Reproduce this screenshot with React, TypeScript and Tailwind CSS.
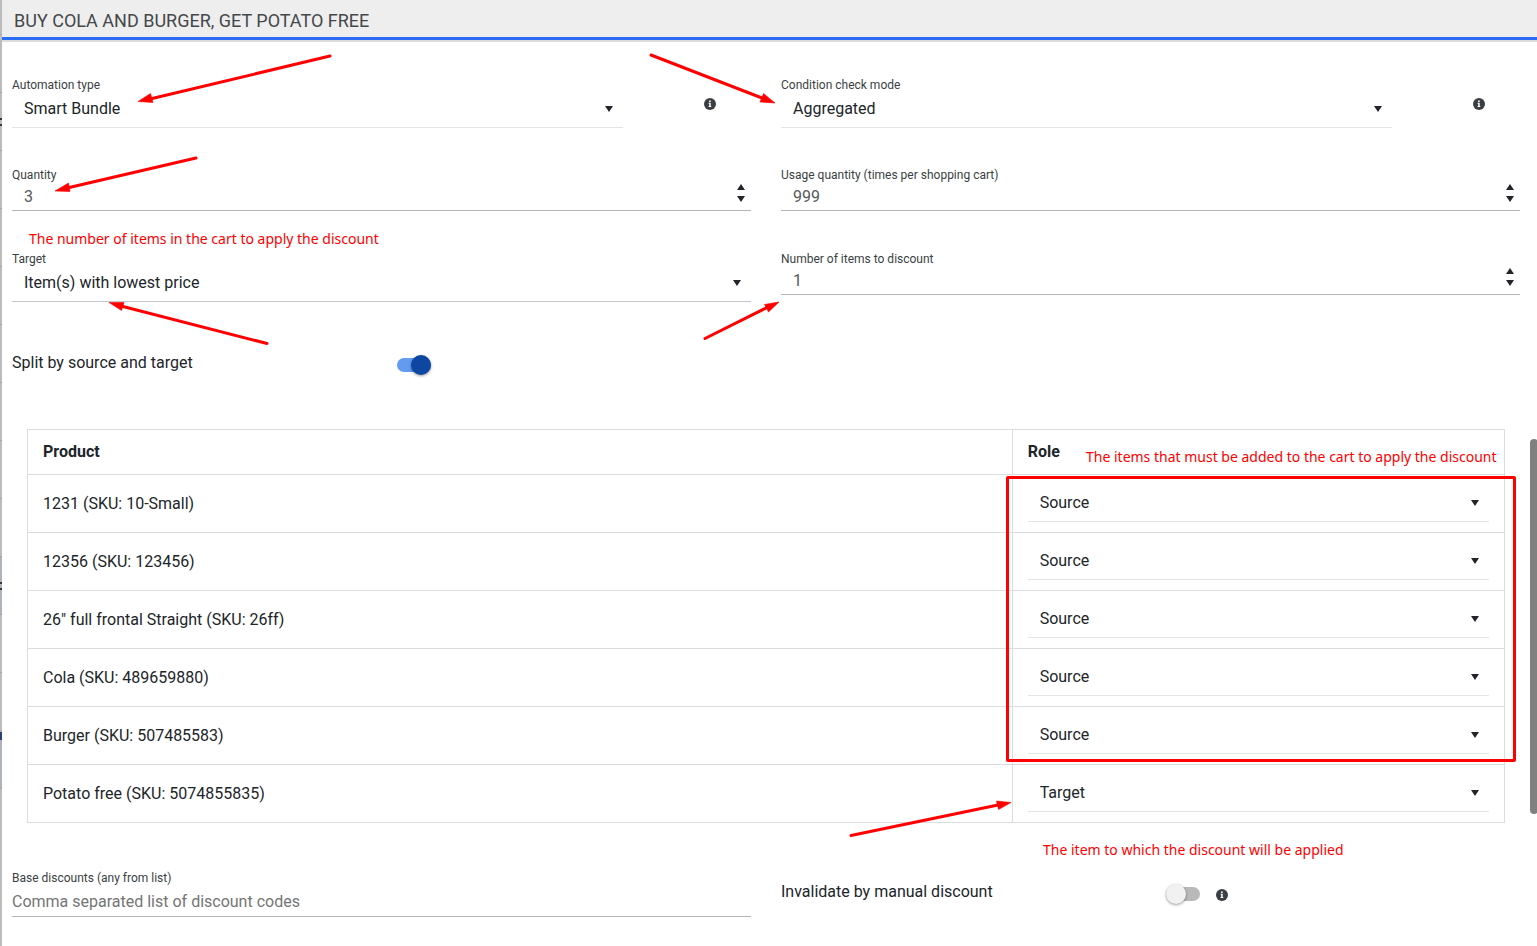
import { useId, type ReactNode } from "react";

const products = [
  { name: "1231 (SKU: 10-Small)", role: "Source" },
  { name: "12356 (SKU: 123456)", role: "Source" },
  { name: '26" full frontal Straight (SKU: 26ff)', role: "Source" },
  { name: "Cola (SKU: 489659880)", role: "Source" },
  { name: "Burger (SKU: 507485583)", role: "Source" },
  { name: "Potato free (SKU: 5074855835)", role: "Target" },
];

function Triangle({ up = false }: { up?: boolean }) {
  return (
    <svg className="block h-1.5 w-2" viewBox="0 0 8 6" fill="#212529" aria-hidden="true">
      <path d={up ? "M0 6h8L4 0z" : "M0 0h8L4 6z"} />
    </svg>
  );
}

function InfoIcon() {
  return (
    <button type="button" aria-label="More information" className="mt-0.5 block size-3 shrink-0">
      <svg viewBox="0 0 12 12" className="block size-3" aria-hidden="true">
        <circle cx="6" cy="6" r="6" fill="#3a3f44" />
        <path
          d="M5.100 2.600h1.600v1.300H5.100zM4.600 4.800h2.100v3.200h.6v1H4.600V8h.6V5.800h-.6z"
          fill="#fff"
        />
      </svg>
    </button>
  );
}

function Label({ id, children }: { id: string; children: ReactNode }) {
  return (
    <label htmlFor={id} className="block text-xs leading-4 text-[#3a3f44]">
      {children}
    </label>
  );
}

function Select({
  id,
  label,
  options,
  strong = false,
}: {
  id?: string;
  label?: string;
  options: string[];
  strong?: boolean;
}) {
  return (
    <div className="relative">
      <select
        id={id}
        aria-label={label}
        className={
          strong
            ? "block h-[35px] w-full appearance-none border-b border-[#c4c4cc] bg-transparent px-3 pb-0.5 text-base outline-none"
            : "block h-[35px] w-full appearance-none border-b border-[#e4e4e4] bg-transparent px-3 pb-0.5 text-base outline-none"
        }
      >
        {options.map((o) => (
          <option key={o}>{o}</option>
        ))}
      </select>
      <span className="pointer-events-none absolute top-[13px] right-2.5">
        <Triangle />
      </span>
    </div>
  );
}

function SelectField(props: { label: string; options: string[]; strong?: boolean }) {
  const id = useId();
  return (
    <div className="min-w-0 flex-1">
      <Label id={id}>{props.label}</Label>
      <Select id={id} options={props.options} strong={props.strong} />
    </div>
  );
}

function SelectWithInfo(props: { label: string; options: string[] }) {
  return (
    <div className="flex items-center">
      <SelectField {...props} />
      <div className="w-32 pl-[81px]">
        <InfoIcon />
      </div>
    </div>
  );
}

function NumberField({ label, value }: { label: string; value: string }) {
  const id = useId();
  return (
    <div>
      <Label id={id}>{label}</Label>
      <div className="flex h-7 items-center border-b border-[#b5b5b5] pr-1.5">
        <input
          id={id}
          inputMode="numeric"
          defaultValue={value}
          className="h-full min-w-0 flex-1 bg-transparent px-3 text-base text-[#55595c] outline-none"
        />
        <div className="flex flex-col gap-1.5 pb-2">
          <button type="button" aria-label={`Increase ${label}`}>
            <Triangle up />
          </button>
          <button type="button" aria-label={`Decrease ${label}`}>
            <Triangle />
          </button>
        </div>
      </div>
    </div>
  );
}

function ToggleField({
  label,
  on = false,
  children,
}: {
  label: string;
  on?: boolean;
  children?: ReactNode;
}) {
  const id = useId();
  return (
    <div className="grid grid-cols-2 gap-x-[30px]">
      <label htmlFor={id} className="text-base leading-6">
        {label}
      </label>
      <div className="flex h-7 items-center gap-4">
        <input
          id={id}
          type="checkbox"
          role="switch"
          defaultChecked={on}
          className="block h-3.5 w-[34px] appearance-none rounded-full bg-[#b9b9b9] before:-mt-[3px] before:block before:size-5 before:rounded-full before:bg-[#f1f1f1] before:shadow-[0_1px_3px_rgba(0,0,0,0.4)] checked:bg-[#639bf0] checked:before:translate-x-3.5 checked:before:bg-[#0d47a1]"
        />
        {children}
      </div>
    </div>
  );
}

function Backdrop() {
  return (
    <div aria-hidden="true" className="w-0.5 shrink-0 bg-[#bcbcbc]">
      <div className="h-[35px] border-b border-[#a5a5a5]" />
      {Array.from({ length: 13 }, (_, i) => (
        <div
          key={i}
          className={
            i === 9 || i === 12
              ? "flex h-[58px] items-center border-b border-[#a5a5a5] bg-[#aeb3bb]"
              : "flex h-[58px] items-center border-b border-[#a5a5a5]"
          }
        >
          {(i === 1 || i === 9) && <span className="h-2 w-0.5 border-y-2 border-[#33373a]" />}
          {i === 12 && <span className="mb-12 h-2 w-0.5 bg-[#2d3f77]" />}
        </div>
      ))}
    </div>
  );
}

const arrows = [
  { line: "M330 56L150 99", head: "M138 101.500L150.500 93.500L153 102.500z" },
  { line: "M651 55L762 98", head: "M775 103L763.500 93.500L760 102z" },
  { line: "M196 158L67 188", head: "M55 191L68.500 183L70 191.500z" },
  { line: "M267 343.500L121 306", head: "M109 302.500L124 302.500L121.500 310.500z" },
  { line: "M705 338.500L768 307", head: "M779 302L764.500 304.500L768.500 312z" },
  { line: "M851 835.500L998 805", head: "M1011 802.500L996.500 801L998.500 809.500z" },
];

function Note({ className, children }: { className: string; children: ReactNode }) {
  return (
    <p
      className={`absolute whitespace-nowrap font-['Noto_Sans',sans-serif] text-sm leading-5 text-[#ff0000] ${className}`}
    >
      {children}
    </p>
  );
}

function Annotations() {
  return (
    <div className="pointer-events-none absolute inset-0">
      <svg className="absolute top-0 left-0 h-[946px] w-[1537px]" viewBox="0 0 1537 946" aria-hidden="true">
        {arrows.map((a) => (
          <g key={a.line}>
            <path d={a.line} stroke="#ff0000" strokeWidth="3" strokeLinecap="round" />
            <path d={a.head} fill="#ff0000" stroke="#ff0000" strokeWidth="0.6" />
          </g>
        ))}
      </svg>
      <div className="absolute top-[476px] left-[1006px] h-[286px] w-[510px] rounded-xs border-3 border-[#ff0000]" />
      <Note className="top-[229px] left-[29px]">
        The number of items in the cart to apply the discount
      </Note>
      <Note className="top-[447px] left-[1086px]">
        The items that must be added to the cart to apply the discount
      </Note>
      <Note className="top-[840px] left-[1043px]">
        The item to which the discount will be applied
      </Note>
    </div>
  );
}

export default function App() {
  const baseId = useId();
  return (
    <div className="relative flex min-h-screen overflow-hidden bg-white font-['Roboto',sans-serif] text-base text-[#212529]">
      <Backdrop />
      <div className="min-w-0 flex-1">
        <header className="border-b-2 border-[#dcdcdc]">
          <h1 className="border-b-3 border-[#2a6df4] bg-[#eeeeee] px-3 pt-[9px] pb-1 text-lg leading-6 text-[#44484b]">
            BUY COLA AND BURGER, GET POTATO FREE
          </h1>
        </header>

        <form className="pt-[35px] pr-[17px] pb-7 pl-2.5">
          <div className="grid grid-cols-2 gap-x-[30px]">
            <SelectWithInfo label="Automation type" options={["Smart Bundle"]} />
            <SelectWithInfo label="Condition check mode" options={["Aggregated"]} />
          </div>

          <div className="mt-[39px] grid grid-cols-2 gap-x-[30px] gap-y-10">
            <NumberField label="Quantity" value="3" />
            <NumberField label="Usage quantity (times per shopping cart)" value="999" />
            <SelectField label="Target" options={["Item(s) with lowest price"]} strong />
            <NumberField label="Number of items to discount" value="1" />
          </div>

          <div className="mt-[49px] grid grid-cols-2 gap-x-[30px]">
            <ToggleField label="Split by source and target" on />
          </div>

          <div className="mt-[50px] px-[15px]">
            <table className="w-full table-fixed border-collapse">
              <thead>
                <tr className="h-[45px] text-left">
                  <th className="w-2/3 border border-[#dbdcdd] px-[15px] py-0 font-bold">Product</th>
                  <th className="border border-[#dbdcdd] px-[15px] py-0 font-bold">Role</th>
                </tr>
              </thead>
              <tbody>
                {products.map((p) => (
                  <tr key={p.name} className="h-[58px]">
                    <td className="border border-[#dbdcdd] px-[15px] py-0">{p.name}</td>
                    <td className="border border-[#dbdcdd] px-[15px] pt-3 pb-2.5">
                      <Select
                        label={`Role of ${p.name}`}
                        options={p.role === "Source" ? ["Source", "Target"] : ["Target", "Source"]}
                      />
                    </td>
                  </tr>
                ))}
              </tbody>
            </table>
          </div>

          <div className="mt-[47px] grid grid-cols-2 gap-x-[30px]">
            <div>
              <Label id={baseId}>Base discounts (any from list)</Label>
              <input
                id={baseId}
                placeholder="Comma separated list of discount codes"
                className="block h-[31px] w-full border-b border-[#b5b5b5] bg-transparent text-base outline-none placeholder:text-[#757575]"
              />
            </div>
            <div className="pt-2.5">
              <ToggleField label="Invalidate by manual discount">
                <InfoIcon />
              </ToggleField>
            </div>
          </div>
        </form>
      </div>
      <div
        aria-hidden="true"
        className="absolute top-[439px] -right-px h-[375px] w-2 rounded-full bg-[#808080]"
      />
      <Annotations />
    </div>
  );
}
